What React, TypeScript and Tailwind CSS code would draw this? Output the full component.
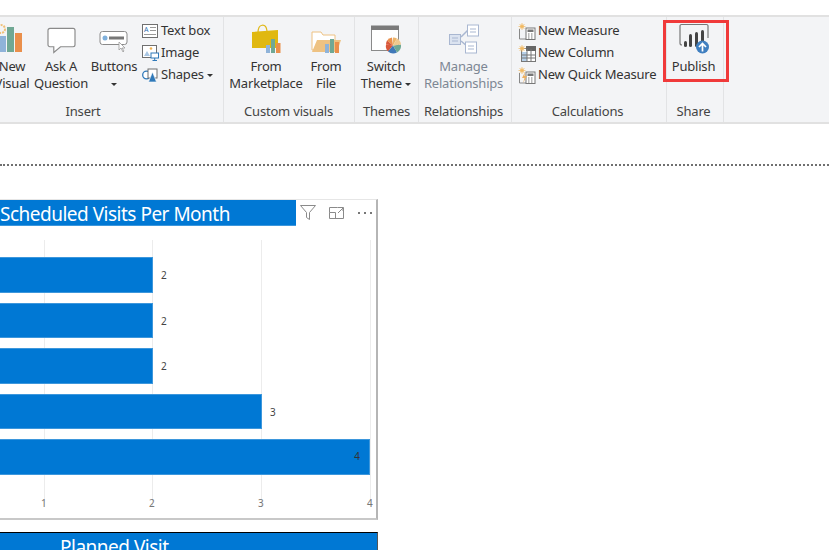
import type { ReactNode } from 'react';

const font = { fontFamily: '"Noto Sans", "Noto Sans CJK SC", sans-serif' };

function NewVisualIcon() {
  return (
    <svg width="28" height="30" viewBox="0 0 28 30">
      <circle cx="3" cy="5" r="4" fill="none" stroke="#f0c078" strokeWidth="2" strokeDasharray="2 1" />
      <rect x="0" y="12" width="8" height="16" fill="#8fb3d9" />
      <rect x="9" y="3" width="7" height="25" fill="#70a894" />
      <rect x="17" y="9" width="7" height="19" fill="#ea8f4b" />
    </svg>
  );
}

function QuestionIcon() {
  return (
    <svg width="29" height="27" viewBox="0 0 30 28">
      <path d="M3 1.5h24a2 2 0 0 1 2 2v15a2 2 0 0 1-2 2H14l-7 6v-6H3a2 2 0 0 1-2-2v-15a2 2 0 0 1 2-2z" fill="#fff" stroke="#8a8a8a" strokeWidth="1.2" />
    </svg>
  );
}

function ButtonsIcon() {
  return (
    <svg width="30" height="24" viewBox="0 0 30 24">
      <rect x="1" y="1.5" width="27" height="13" rx="2.5" fill="#fff" stroke="#8a8a8a" />
      <circle cx="6" cy="8" r="2.5" fill="#7fb0dc" />
      <rect x="10" y="6.5" width="15" height="3" fill="#777" />
      <path d="M20 12v8l2-2 2 4 1-1-2-3h3z" fill="#fff" stroke="#999" strokeWidth="0.8" />
    </svg>
  );
}

function TextBoxIcon() {
  return (
    <svg width="16" height="14" viewBox="0 0 16 14">
      <rect x="0.5" y="0.5" width="15" height="13" fill="#fff" stroke="#6f6f6f" />
      <text x="2" y="8" fontSize="7" fill="#2f6fb0" style={font}>A</text>
      <path d="M8 3.5h6M8 6.5h6M2 10.5h12" stroke="#999" />
    </svg>
  );
}

function ImageIcon() {
  return (
    <svg width="17" height="16" viewBox="0 0 17 16">
      <rect x="0.5" y="0.5" width="14" height="12" fill="#fff" stroke="#6f6f6f" />
      <circle cx="9" cy="3.5" r="1.3" fill="#f0b050" />
      <path d="M2 11l3-5 3 5z" fill="#a9c6e3" />
      <rect x="9" y="8" width="7.5" height="5" fill="#fff" stroke="#2f79b9" />
      <path d="M12.7 13v2M10.5 15.5h4.5" stroke="#2f79b9" />
    </svg>
  );
}

function ShapesIcon() {
  return (
    <svg width="17" height="15" viewBox="0 0 17 15">
      <circle cx="4.5" cy="7" r="3.8" fill="#fff" stroke="#2f79b9" strokeWidth="1.3" />
      <rect x="6" y="1" width="9" height="9" fill="#fff" stroke="#6f6f6f" />
      <path d="M10.5 4l4 10h-8z" fill="#2f79b9" stroke="#fff" strokeWidth="0.6" />
    </svg>
  );
}

function MarketplaceIcon() {
  return (
    <svg width="31" height="30" viewBox="0 0 31 30">
      <path d="M7 9c0-10 8-10 9-2" fill="none" stroke="#e0b818" strokeWidth="1.2" />
      <path d="M1 8l26-2v18H1z" fill="#e0b810" />
      <rect x="15" y="21" width="4" height="8" fill="#8fb3d9" />
      <rect x="20" y="15" width="4" height="14" fill="#70a894" />
      <rect x="25" y="19" width="4.5" height="10" fill="#ea8f4b" />
    </svg>
  );
}

function FileIcon() {
  return (
    <svg width="30" height="24" viewBox="0 0 30 24">
      <path d="M1 2h9l2 3h12v15H1z" fill="#fff" stroke="#eec282" />
      <path d="M1 22l5-12h24l-4 12z" fill="#eec282" />
      <rect x="14" y="14" width="4" height="9" fill="#8fb3d9" />
      <rect x="19" y="9" width="4" height="14" fill="#70a894" />
      <rect x="24" y="12" width="4" height="11" fill="#ea8f4b" />
    </svg>
  );
}

function ThemeIcon() {
  return (
    <svg width="31" height="30" viewBox="0 0 31 30">
      <g transform="translate(0 1.5)">
        <rect x="0.5" y="1" width="27" height="24" fill="#fff" stroke="#8a8a8a" />
        <rect x="0" y="0" width="28" height="4.5" fill="#7a7a7a" />
        <path d="M22 20V12a8 8 0 0 1 4 1z" fill="#ecb46a" />
        <path d="M22 20l-6-5a8 8 0 0 1 5-3z" fill="#ea8f4b" />
        <path d="M22 20l-7-1a8 8 0 0 1 1-4z" fill="#d9583a" />
        <path d="M22 20l-5 6a8 8 0 0 1-2-7z" fill="#d9583a" />
        <path d="M22 20l4 7a8 8 0 0 1-9-1z" fill="#3f78b8" />
        <path d="M22 20l8-1a8 8 0 0 1-4 8z" fill="#70a894" />
        <path d="M22 20l4-7a8 8 0 0 1 4 6z" fill="#efc98f" />
      </g>
    </svg>
  );
}

function RelationshipsIcon() {
  return (
    <svg width="30" height="30" viewBox="0 0 30 30">
      <path d="M12 13l7-7M12 17l7 6" stroke="#a9b7d1" strokeWidth="1.5" />
      <rect x="0.5" y="10.5" width="11" height="10" fill="#dbe3f0" stroke="#a9b7d1" />
      <rect x="18.5" y="1" width="11" height="11" fill="#fff" stroke="#a9b7d1" />
      <rect x="16.5" y="18" width="11" height="11" fill="#fff" stroke="#a9b7d1" />
      <path d="M3 14h6M3 17h6M21 5h6M21 8h6M19 22h6M19 25h6" stroke="#a9b7d1" />
    </svg>
  );
}

function CalcIcon({ kind }: { kind: 'measure' | 'column' | 'quick' }) {
  return (
    <svg width="18" height="17" viewBox="0 0 18 17">
      {kind === 'column' ? (
        <>
          <rect x="3.5" y="3.5" width="14" height="13" fill="#fff" stroke="#777" />
          <rect x="8" y="1" width="10" height="5" fill="#666" />
          <rect x="4" y="7" width="5" height="9" fill="#b7d0e8" />
          <path d="M9 4v12M13 4v12M4 10h13M4 13h13" stroke="#777" />
        </>
      ) : (
        <>
          <path d="M1.5 6v10h12" fill="none" stroke="#888" />
          <rect x="8" y="5" width="9" height="11.5" fill="#fff" stroke="#777" />
          <rect x="9.5" y="6.5" width="6" height="2.5" fill="#777" />
          <path d="M10 11h1.5M13 11h1.5M10 13h1.5M13 13h1.5M10 15h1.5M13 15h1.5" stroke="#777" />
          {kind === 'quick' && <path d="M7 5l-3 6h2.5L5 16l4-7H6.5z" fill="#eeb060" />}
        </>
      )}
      <circle cx="4" cy="3.5" r="2" fill="#f5c983" />
      <path d="M4 0v7M0.5 3.5h7M1.5 1l5 5M6.5 1l-5 5" stroke="#f0b860" strokeWidth="0.7" />
    </svg>
  );
}

function PublishIcon() {
  return (
    <svg width="33" height="31" viewBox="0 0 33 31">
      <path d="M3 20V3a1.5 1.5 0 0 1 1.5-1.5h25A1.5 1.5 0 0 1 31 3v12" fill="none" stroke="#777" strokeWidth="1.2" />
      <path d="M3 20a2 2 0 0 0 2 2" fill="none" stroke="#777" strokeWidth="1.2" />
      <rect x="7" y="18" width="3" height="6" rx="1.5" fill="#444" />
      <rect x="12" y="11" width="3" height="13" rx="1.5" fill="#444" />
      <rect x="18" y="9" width="3" height="15" rx="1.5" fill="#444" />
      <rect x="24" y="7" width="3" height="12" rx="1.5" fill="#444" />
      <circle cx="25.5" cy="24" r="6.5" fill="#3f7fc0" />
      <path d="M25.5 28.5v-8M22 24l3.5-3.5 3.5 3.5" fill="none" stroke="#fff" strokeWidth="1.7" />
    </svg>
  );
}

function Caret() {
  return <span className="inline-block w-0 h-0 border-x-[3px] border-x-transparent border-t-[3px] border-t-[#333] align-middle" />;
}

function BigButton({ icon, lines, width, muted }: { icon: ReactNode; lines: ReactNode[]; width: string; muted?: boolean }) {
  return (
    <div className={`flex flex-col items-center shrink-0 ${width}`}>
      <div className="h-[33px] flex items-end justify-center w-full">{icon}</div>
      <div className={`mt-[4px] text-center leading-[17px] whitespace-nowrap ${muted ? 'text-[#7d8794]' : 'text-[#333]'}`}>
        {lines.map((line, i) => (
          <div key={i}>{line}</div>
        ))}
      </div>
    </div>
  );
}

function SmallButton({ icon, label }: { icon: ReactNode; label: ReactNode }) {
  return (
    <div className="h-[22px] flex items-center gap-[2px] whitespace-nowrap text-[#333]">
      <span className="w-[18px] flex justify-center">{icon}</span>
      {label}
    </div>
  );
}

function Group({ label, width, labelClass, children }: { label: string; width: string; labelClass?: string; children: ReactNode }) {
  return (
    <div className={`shrink-0 h-full flex flex-col border-r border-[#e2e3e5] ${width}`}>
      <div className="flex-1 flex pt-[4px]">{children}</div>
      <div className={`h-[19px] text-center text-[#444] leading-[17px] ${labelClass ?? ''}`}>{label}</div>
    </div>
  );
}

function Ribbon() {
  return (
    <div className="h-[109px] mt-[15px] bg-[#f3f4f6] border-y-2 border-[#e1e1e1] flex overflow-hidden text-[13px] tracking-[-0.2px]">
      <Group label="Insert" width="w-[224px]" labelClass="pr-[57px]">
        <div className="flex -ml-[11px]">
          <BigButton icon={<NewVisualIcon />} lines={['New', 'Visual']} width="w-[46px]" />
          <BigButton icon={<QuestionIcon />} lines={['Ask A', 'Question']} width="w-[52px]" />
          <BigButton icon={<ButtonsIcon />} lines={['Buttons', <Caret key="c" />]} width="w-[54px]" />
          <div className="-mt-[1px]">
            <SmallButton icon={<TextBoxIcon />} label="Text box" />
            <SmallButton icon={<ImageIcon />} label="Image" />
            <SmallButton icon={<ShapesIcon />} label={<span>Shapes <Caret /></span>} />
          </div>
        </div>
      </Group>
      <Group label="Custom visuals" width="w-[131px]" labelClass="pr-[1px]">
        <BigButton icon={<MarketplaceIcon />} lines={['From', 'Marketplace']} width="w-[84px]" />
        <BigButton icon={<FileIcon />} lines={['From', 'File']} width="w-[36px]" />
      </Group>
      <Group label="Themes" width="w-[64px]">
        <BigButton icon={<ThemeIcon />} lines={['Switch', <span key="t">Theme <Caret /></span>]} width="w-[62px]" />
      </Group>
      <Group label="Relationships" width="w-[93px] pr-[3px]">
        <BigButton icon={<RelationshipsIcon />} lines={['Manage', 'Relationships']} width="w-full" muted />
      </Group>
      <Group label="Calculations" width="w-[155px] pr-[3px]">
        <div className="pl-[6px] -mt-[1px]">
          <SmallButton icon={<CalcIcon kind="measure" />} label="New Measure" />
          <SmallButton icon={<CalcIcon kind="column" />} label="New Column" />
          <SmallButton icon={<CalcIcon kind="quick" />} label="New Quick Measure" />
        </div>
      </Group>
      <Group label="Share" width="w-[57px] pr-[3px]">
        <BigButton icon={<PublishIcon />} lines={['Publish']} width="w-full" />
      </Group>
    </div>
  );
}

const bars = [
  { width: 'w-[153px]', value: 2 },
  { width: 'w-[153px]', value: 2 },
  { width: 'w-[153px]', value: 2 },
  { width: 'w-[262px]', value: 3 },
];

function FilterIcon() {
  return (
    <svg width="16" height="15" viewBox="0 0 16 15">
      <path d="M0.5 0.5h15l-6 7v7l-3-2v-5z" fill="none" stroke="#8a8a8a" />
    </svg>
  );
}

function ExpandIcon() {
  return (
    <svg width="15" height="13" viewBox="0 0 15 13">
      <path d="M0.5 6.5v6h14v-11h-6M0.5 6.5h6v6M0.5 6.5v-5h8" fill="none" stroke="#8a8a8a" />
      <path d="M9 7l5-5M10.5 1.5h3.5v3.5" fill="none" stroke="#8a8a8a" />
    </svg>
  );
}

function MoreIcon() {
  return (
    <svg width="16" height="4" viewBox="0 0 16 4">
      <rect x="1" y="1" width="2" height="2" fill="#777" />
      <rect x="7" y="1" width="2" height="2" fill="#777" />
      <rect x="13" y="1" width="2" height="2" fill="#777" />
    </svg>
  );
}

function Chart() {
  return (
    <div className="relative w-[378px] h-[321px] mt-[33px] border-t border-r-2 border-b-2 border-t-[#e6e6e6] border-r-[#b5b5b5] border-b-[#c8c8c8]">
      <div className="flex items-start">
        <div className="w-[296px] h-[26px] bg-[#0078d4] border-b border-[#3d97dc] text-white text-[19px] leading-[28px] whitespace-nowrap overflow-hidden tracking-[-0.5px]">
          Scheduled Visits Per Month
        </div>
        <div className="flex-1 flex items-center pt-[5px] pl-[4px] gap-[13px]">
          <FilterIcon />
          <ExpandIcon />
          <MoreIcon />
        </div>
      </div>
      {/* gridlines sit behind the bars */}
      <div className="absolute left-[44px] top-[40px] h-[267px] border-l border-[#ececec]" />
      <div className="absolute left-[152px] top-[40px] h-[267px] border-l border-[#ececec]" />
      <div className="absolute left-[261px] top-[40px] h-[267px] border-l border-[#ececec]" />
      <div className="absolute left-[370px] top-[40px] h-[267px] border-l border-[#ececec]" />
      <div className="relative mt-[31px] flex flex-col gap-[10px]">
        {bars.map((bar, i) => (
          <div key={i} className="flex items-center">
            <div className={`h-[35.5px] bg-[#0078d4] border-y border-r border-[#3d97dc] ${bar.width}`} />
            <span className="ml-[8px] mt-[2px] text-[10px] text-[#444]">{bar.value}</span>
          </div>
        ))}
        <div className="w-[370px] h-[35.5px] bg-[#0078d4] border-y border-r border-[#3d97dc] flex items-center justify-end pr-[9px] text-[10px] text-[#333]">
          4
        </div>
      </div>
      <div className="relative mt-[21px] text-[10px] text-[#777] flex leading-[14px]">
        <span className="w-[41px]" />
        <span className="w-[108px]">1</span>
        <span className="w-[109px]">2</span>
        <span className="w-[109px]">3</span>
        <span>4</span>
      </div>
    </div>
  );
}

export default function App() {
  return (
    <div className="w-[829px] h-[550px] overflow-hidden bg-white" style={font}>
      <Ribbon />
      <div className="mt-[40px] border-t-2 border-dotted border-[#707070]" />
      <Chart />
      <div className="mt-[12px] w-[378px] h-[40px] bg-[#0078d4] border-t border-r border-t-black border-r-[#555] text-white text-[19px] tracking-[-0.5px] leading-[28px] pl-[60px] whitespace-nowrap">
        Planned Visit
      </div>
      {/* red annotation round Publish */}
      <div className="absolute left-[663px] top-[20px] w-[66px] h-[62px] border-[3px] border-[#f03a3a]" />
    </div>
  );
}
